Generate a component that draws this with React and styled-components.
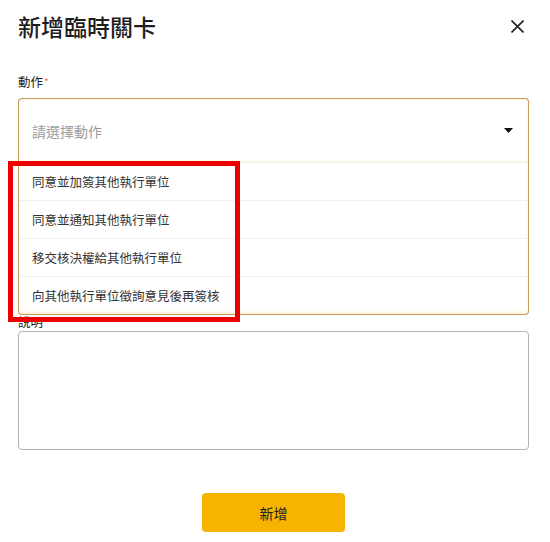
import React from 'react'
import styled, { createGlobalStyle } from 'styled-components'

const GlobalStyle = createGlobalStyle`
  html, body {
    margin: 0;
    padding: 0;
    background: #fff;
  }
  body {
    font-family: 'Noto Sans CJK TC', 'Noto Sans', sans-serif;
    color: #222;
  }
`

const Dialog = styled.div`
  position: relative;
  width: 550px;
  height: 542px;
  box-sizing: border-box;
  padding: 10px 21px 0 18px;
  background: #fff;
`

const Header = styled.div`
  display: flex;
  align-items: center;
  justify-content: space-between;
  height: 32px;
`

const Title = styled.h2`
  margin: 0;
  font-size: 23px;
  line-height: 32px;
  font-weight: 500;
  color: #1e1e1e;
`

const CloseButton = styled.button`
  display: flex;
  align-items: center;
  justify-content: center;
  width: 20px;
  height: 20px;
  margin-right: 2px;
  padding: 0;
  border: none;
  background: none;
  cursor: pointer;
`

const Field = styled.div`
  display: flex;
  flex-direction: column;
  margin-top: ${(p) => p.$top || 0}px;
`

const Label = styled.label`
  font-size: 12.5px;
  line-height: 18px;
  color: #222;
  margin-bottom: ${(p) => p.$gap || 0}px;
`

const Required = styled.span`
  color: #e8754a;
  font-size: 10px;
  vertical-align: top;
  margin-left: 1px;
`

const SelectBox = styled.div`
  position: relative;
`

const Control = styled.div`
  display: flex;
  align-items: center;
  justify-content: space-between;
  height: 64px;
  box-sizing: border-box;
  padding: 0 15px 0 13px;
  border: 1px solid #c69d58;
  border-bottom: none;
  border-radius: 4px 4px 0 0;
  box-shadow: inset 0 0 3px rgba(245, 196, 80, 0.35);
  background: #fff;
`

const Placeholder = styled.span`
  font-size: 14px;
  color: #9b9b9b;
`

const Menu = styled.ul`
  position: absolute;
  top: 64px;
  left: 0;
  right: 0;
  margin: 0;
  padding: 0;
  list-style: none;
  background: #fff;
  border: 1px solid #c69d58;
  border-top: none;
  border-radius: 0 0 4px 4px;
  box-shadow: inset 0 -2px 3px rgba(245, 196, 80, 0.25);
  z-index: 2;
`

const Option = styled.li`
  height: 37px;
  display: flex;
  align-items: center;
  padding: 0 13px;
  border-top: 1px solid #f0f0f0;
  font-size: 12.5px;
  color: #333;
`

const TextArea = styled.textarea`
  display: block;
  height: 119px;
  box-sizing: border-box;
  border: 1px solid #b3b3b3;
  border-radius: 4px;
  resize: none;
  font-family: inherit;
  padding: 8px 12px;
`

const Footer = styled.div`
  display: flex;
  justify-content: center;
  margin-top: 43px;
`

const SubmitButton = styled.button`
  width: 143px;
  height: 39px;
  border: none;
  border-radius: 4px;
  background: #f6b400;
  color: #222;
  font-family: inherit;
  font-size: 14px;
  cursor: pointer;
`

const Highlight = styled.div`
  position: absolute;
  left: 8px;
  top: 161px;
  width: 232px;
  height: 161px;
  box-sizing: border-box;
  border: 5px solid #ee0000;
  pointer-events: none;
  z-index: 5;
`

const options = [
  '同意並加簽其他執行單位',
  '同意並通知其他執行單位',
  '移交核決權給其他執行單位',
  '向其他執行單位徵詢意見後再簽核',
]

const App = () => (
  <>
    <GlobalStyle />
    <Dialog>
      <Header>
        <Title>新增臨時關卡</Title>
        <CloseButton aria-label="close">
          <svg width="13" height="13" viewBox="0 0 13 13">
            <path d="M0.5 0.5 L12.5 12.5 M12.5 0.5 L0.5 12.5" stroke="#222" strokeWidth="1.6" />
          </svg>
        </CloseButton>
      </Header>

      <Field $top={31}>
        <Label $gap={7}>
          動作<Required>*</Required>
        </Label>
        <SelectBox>
          <Control>
            <Placeholder>請選擇動作</Placeholder>
            <svg width="9" height="5" viewBox="0 0 9 5">
              <path d="M0 0 H9 L4.5 5 Z" fill="#111" />
            </svg>
          </Control>
          <Menu>
            {options.map((o) => (
              <Option key={o}>{o}</Option>
            ))}
          </Menu>
        </SelectBox>
      </Field>

      <Field $top={151}>
        <Label>說明</Label>
        <TextArea />
      </Field>

      <Footer>
        <SubmitButton>新增</SubmitButton>
      </Footer>

      <Highlight />
    </Dialog>
  </>
)

export default App
